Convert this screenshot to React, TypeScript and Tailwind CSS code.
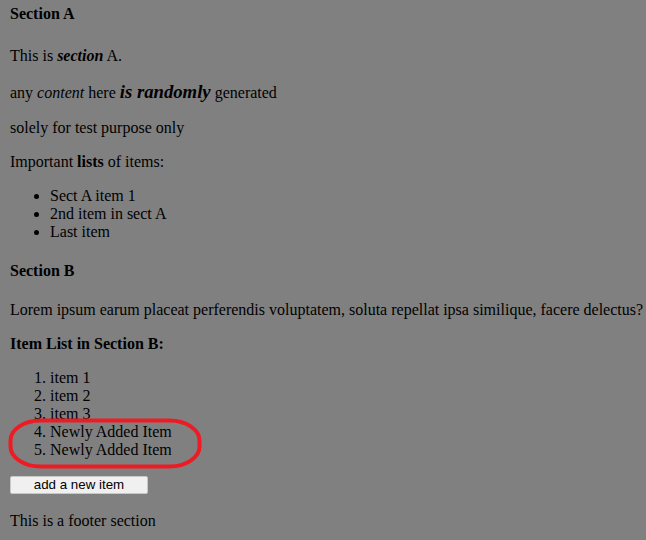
import React from 'react';

const sectionAItems = ['Sect A item 1', '2nd item in sect A', 'Last item'];
const sectionBItems = ['item 1', 'item 2', 'item 3', 'Newly Added Item', 'Newly Added Item'];

export default function App() {
  return (
    <div className="min-h-screen bg-[#808080] pl-[10px] pt-[5px] font-['Liberation_Serif',serif] text-[16px] leading-[normal] text-black">
      {/* Section A */}
      <h4 className="m-0 font-bold">Section A</h4>
      <p className="mt-[24px]">
        This is <strong><em>section</em></strong> A.
      </p>
      <p className="mt-[16px]">
        any <em>content</em> here{' '}
        <strong className="text-[18.72px]">
          <em>is randomly</em>
        </strong>{' '}
        generated
      </p>
      <p className="mt-[16px]">solely for test purpose only</p>
      <p className="mt-[16px]">
        Important <strong>lists</strong> of items:
      </p>
      <ul className="mt-[16px] list-disc pl-[40px]">
        {sectionAItems.map((item) => (
          <li key={item}>{item}</li>
        ))}
      </ul>

      {/* Section B */}
      <h4 className="mt-[21px] font-bold">Section B</h4>
      <p className="mt-[21px] whitespace-nowrap">
        Lorem ipsum earum placeat perferendis voluptatem, soluta repellat ipsa similique, facere delectus?
      </p>
      <p className="mt-[16px] font-bold">Item List in Section B:</p>
      <div className="relative mt-[16px]">
        <ol className="list-decimal pl-[40px]">
          {sectionBItems.map((item, i) => (
            <li key={i}>{item}</li>
          ))}
        </ol>
        {/* highlight drawn over items 4 and 5 */}
        <svg className="pointer-events-none absolute left-[-2px] top-[49px]" width="194" height="51" viewBox="0 0 194 51">
          <rect x="2.5" y="2.5" width="189" height="46" rx="30" ry="20" fill="none" stroke="#ed1c24" strokeWidth="4" />
        </svg>
      </div>

      <div className="mt-[16px]">
        <button className="h-[18px] w-[138px] rounded-[2px] border border-[#c8c8c8] bg-[#f0f0f0] font-['Liberation_Sans',Arial,sans-serif] text-[13.33px] leading-none text-black">
          add a new item
        </button>
      </div>

      <p className="mt-[18px]">This is a footer section</p>
    </div>
  );
}
